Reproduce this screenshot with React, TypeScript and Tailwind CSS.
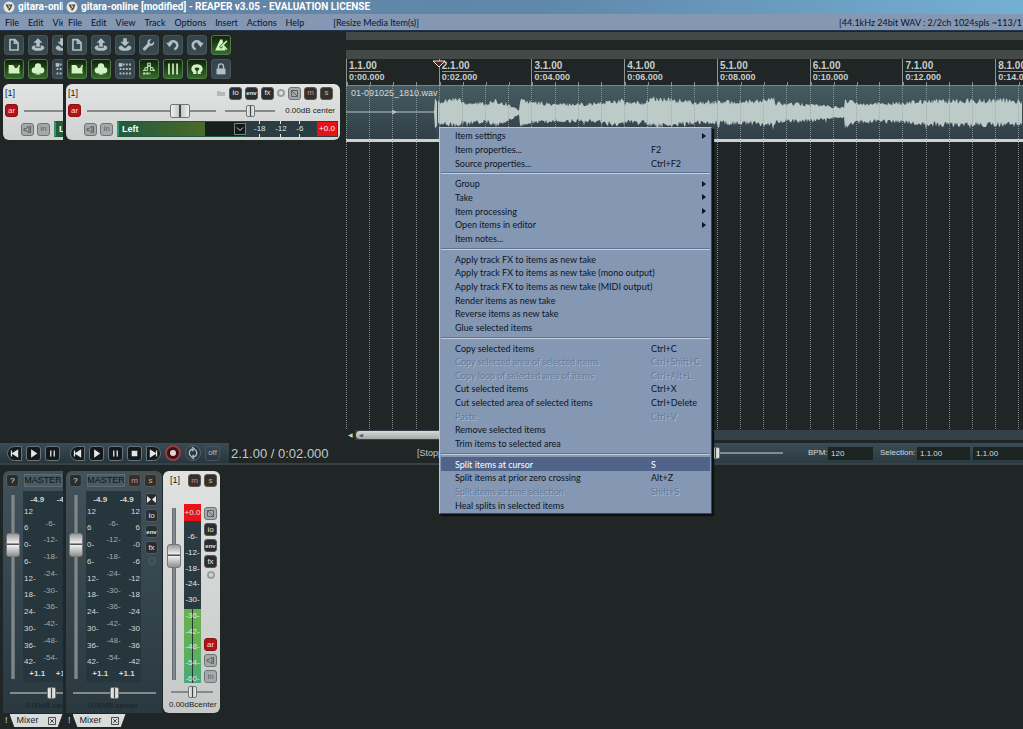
import type { ReactNode } from 'react';
import clsx from 'clsx';

const menus = ['File', 'Edit', 'View', 'Track', 'Options', 'Insert', 'Actions', 'Help'];

type Item = { label: string; keys?: string; sub?: boolean; off?: boolean; active?: boolean };

const menuGroups: Item[][] = [
  [
    { label: 'Item settings', sub: true },
    { label: 'Item properties...', keys: 'F2' },
    { label: 'Source properties...', keys: 'Ctrl+F2' },
  ],
  [
    { label: 'Group', sub: true },
    { label: 'Take', sub: true },
    { label: 'Item processing', sub: true },
    { label: 'Open items in editor', sub: true },
    { label: 'Item notes...' },
  ],
  [
    { label: 'Apply track FX to items as new take' },
    { label: 'Apply track FX to items as new take (mono output)' },
    { label: 'Apply track FX to items as new take (MIDI output)' },
    { label: 'Render items as new take' },
    { label: 'Reverse items as new take' },
    { label: 'Glue selected items' },
  ],
  [
    { label: 'Copy selected items', keys: 'Ctrl+C' },
    { label: 'Copy selected area of selected items', keys: 'Ctrl+Shift+C', off: true },
    { label: 'Copy loop of selected area of items', keys: 'Ctrl+Alt+L', off: true },
    { label: 'Cut selected items', keys: 'Ctrl+X' },
    { label: 'Cut selected area of selected items', keys: 'Ctrl+Delete' },
    { label: 'Paste', keys: 'Ctrl+V', off: true },
    { label: 'Remove selected items' },
    { label: 'Trim items to selected area' },
  ],
  [
    { label: 'Split items at cursor', keys: 'S', active: true },
    { label: 'Split items at prior zero crossing', keys: 'Alt+Z' },
    { label: 'Split items at time selection', keys: 'Shift+S', off: true },
    { label: 'Heal splits in selected items' },
  ],
];

const measures = [
  ['1.1.00', '0:00.000'],
  ['2.1.00', '0:02.000'],
  ['3.1.00', '0:04.000'],
  ['4.1.00', '0:06.000'],
  ['5.1.00', '0:08.000'],
  ['6.1.00', '0:10.000'],
  ['7.1.00', '0:12.000'],
  ['8.1.00', '0:14.000'],
];

// 20x20 drawings for the toolbar
const icons: Record<string, ReactNode> = {
  new: <path d="M5.500 4h5.500l3.500 3.500v8h-9zM10.500 4v4h4" fill="none" stroke="currentColor" strokeWidth="1.800" />,
  open: <path d="M10 2.500 5 7.500H8V12h4V7.500h3zM3 13c0-1.500 2-2.400 4-2.600V13h6v-2.600c2 .2 4 1.100 4 2.600 0 2-3 3.500-7 3.500S3 15 3 13z" fill="currentColor" />,
  save: <path d="M10 11.500 5 6.500H8V2.500h4V6.500h3zM3 13c0-1.200 1.300-2 3-2.400L10 14l4-3.400c1.700.4 3 1.200 3 2.400 0 2-3 3.500-7 3.500S3 15 3 13z" fill="currentColor" />,
  wrench: <path d="M15.500 6.200 13 8.500 11 8l-.5-2L13 3.700C11 3 8.800 4 8.300 6c-.2.800-.1 1.500.1 2.200L3.800 13a1.700 1.700 0 0 0 2.500 2.500L11 10.800c3 .8 5.600-2 4.500-4.600z" fill="currentColor" />,
  undo: (
    <>
      <path d="M6 8.500a4.600 4.600 0 1 1 5.500 6.300" fill="none" stroke="currentColor" strokeWidth="2.800" />
      <path d="M2.500 7.500h7.500L6 12.500z" fill="currentColor" />
    </>
  ),
  redo: (
    <>
      <path d="M14 8.500a4.600 4.600 0 1 0-5.500 6.300" fill="none" stroke="currentColor" strokeWidth="2.800" />
      <path d="M17.500 7.500H10l4 5z" fill="currentColor" />
    </>
  ),
  metronome: (
    <>
      <path d="M3.500 16 9 4h2.500l3.500 12z" fill="currentColor" />
      <path d="m9 13 8-8" stroke="#24501c" strokeWidth="3" />
      <path d="m9.500 12.500 7-7M12 10l4.500 5" stroke="currentColor" strokeWidth="1.700" />
    </>
  ),
  crossfade: (
    <>
      <path d="M4 5.500h12v9.500H4z" fill="currentColor" />
      <path d="M9 5.500h7c-1 2.500-2.500 4-4 4.500z" fill="#24501c" />
      <path d="M5 6 16 14.500M10.500 10.500c3-.5 5-2 5.500-5" stroke="currentColor" strokeWidth="1.300" fill="none" />
    </>
  ),
  group: (
    <>
      <circle cx="10" cy="7" r="3.500" fill="currentColor" />
      <circle cx="6.500" cy="11.500" r="3.500" fill="currentColor" />
      <circle cx="13.500" cy="11.500" r="3.500" fill="currentColor" />
      <path d="M9 9h2v5l2 2H7l2-2z" fill="currentColor" />
    </>
  ),
  grid: (
    <>
      <path d="M4 5h13M4 10h13M4 15h13" stroke="currentColor" strokeWidth="2" strokeDasharray="2 1.500" />
      <path d="M3 3.500h4v4H3z" fill="currentColor" />
    </>
  ),
  envelope: (
    <>
      <path d="M3.500 12 7 10l3-5 3 5 3.500 2" stroke="currentColor" fill="none" strokeWidth="1.300" />
      <path d="M8.500 3.500h3v3h-3zM5.500 8.500h3v3h-3zM11.500 8.500h3v3h-3z" fill="#24501c" stroke="currentColor" />
      <path d="M3.500 15h8" stroke="currentColor" strokeWidth="2" strokeDasharray="2.500 1" />
    </>
  ),
  lines: <path d="M5.500 4v12M10 4v12M14.500 4v12" stroke="currentColor" strokeWidth="1.800" />,
  snap: <path d="M7.500 15.500v-2.500c-3.500-3-2-6.500 2.500-6.500s6 3.500 2.500 6.500v2.500" fill="none" stroke="currentColor" strokeWidth="3.600" />,
  lock: (
    <>
      <path d="M5 9.500h10v6.500H5z" fill="currentColor" />
      <path d="M7.200 10V7c0-3.600 5.600-3.600 5.600 0v3" stroke="currentColor" strokeWidth="1.600" fill="none" />
    </>
  ),
};

const toolRows: [string, boolean][][] = [
  [['new', false], ['open', false], ['save', false], ['wrench', false], ['undo', false], ['redo', false], ['metronome', true]],
  [['crossfade', true], ['group', true], ['grid', false], ['envelope', true], ['lines', true], ['snap', true], ['lock', false]],
];

const TitleBar = ({ clipped = false }: { clipped?: boolean }) => (
  <div className="h-[14px] shrink-0 flex items-center gap-[3px] pl-[3px] font-['Roboto',sans-serif] text-[10px] leading-none font-bold text-white whitespace-nowrap">
    <svg viewBox="0 0 12 12" className="w-3 h-3 shrink-0">
      <circle cx="6" cy="6" r="5.500" fill="#e8e6de" />
      <path d="M2.500 3.500h7L8 7.500 6 10 4.500 7z" fill="#4b4a46" />
      <path d="m5 4.500 2 1-1.500 2" stroke="#e8e6de" fill="none" />
    </svg>
    {clipped ? 'gitara-online' : 'gitara-online [modified] - REAPER v3.05 - EVALUATION LICENSE'}
  </div>
);

const MenuBar = ({ clipped = false }: { clipped?: boolean }) => (
  <nav className="h-[17px] shrink-0 flex items-center pl-[5px] pr-px gap-[9px] overflow-hidden bg-[#8497b3] border-b border-[#26344a] font-['Lato',sans-serif] text-[9px] leading-none text-[#0c1526] whitespace-nowrap">
    {(clipped ? menus.slice(0, 3) : menus).map((m) => (
      <button key={m}>{m}</button>
    ))}
    {!clipped && (
      <>
        <span className="ml-[20px]">[Resize Media Item(s)]</span>
        <span className="ml-auto">[44.1kHz 24bit WAV : 2/2ch 1024spls ~113/1</span>
      </>
    )}
  </nav>
);

const Toolbar = ({ clipped = false }: { clipped?: boolean }) => (
  <div className="flex flex-col gap-1 pl-1 pt-1">
    {toolRows.map((row, i) => (
      <div key={i} className="flex gap-1">
        {(clipped ? row.slice(0, 3) : row).map(([name, on]) => (
          <button
            key={name}
            aria-label={name}
            className={clsx(
              'w-5 h-5 shrink-0 rounded-[3px] border',
              on
                ? 'bg-linear-to-b from-[#10240c] to-[#356b2b] border-[#4f7a48] text-[#d3f3c4]'
                : 'bg-linear-to-b from-[#33434a] to-[#3b4a51] border-[#46565c] text-[#b4bfc2]',
            )}
          >
            <svg viewBox="0 0 20 20" className="w-full h-full">{icons[name]}</svg>
          </button>
        ))}
      </div>
    ))}
  </div>
);

const tones = {
  dark: 'bg-[#2a2d2f] border-[#55595b] text-[#e4e6e6]',
  mute: 'bg-[#372e2e] border-[#5c5453] text-[#cf9289]',
  solo: 'bg-[#33302b] border-[#5c5850] text-[#c9bd84]',
  grey: 'bg-[#a4aaa9] border-[#6e7473] text-[#5c6362]',
  red: 'bg-[#b21218] border-[#8a1014] text-[#ffd9d4]',
};

const Chip = ({ children, tone = 'dark', label }: { children: ReactNode; tone?: keyof typeof tones; label?: string }) => (
  <button
    aria-label={label}
    className={clsx('w-[13px] h-[13px] shrink-0 rounded-[3px] border flex items-center justify-center text-[8px] leading-none', tones[tone])}
  >
    {children}
  </button>
);

const EnvChip = () => (
  <Chip><span className="text-[6px] font-bold">env</span></Chip>
);

const Speaker = () => (
  <svg viewBox="0 0 9 9" className="w-[9px] h-[9px]">
    <path d="M1 3.500h2L6 1v7L3 5.500H1zM7.500 1v7" stroke="currentColor" fill="none" />
  </svg>
);

const Phase = () => (
  <svg viewBox="0 0 9 9" className="w-[9px] h-[9px]">
    <path d="M1.500 1.500h6v6h-6zM1.500 1.500l6 6" stroke="currentColor" fill="none" />
  </svg>
);

const Ring = ({ dim = false }: { dim?: boolean }) => (
  <span className={clsx('w-2 h-2 shrink-0 rounded-full border-2', dim ? 'border-[#45555d]' : 'border-[#9b9f9e]')} />
);

const hSlider =
  'appearance-none bg-transparent h-[13px] m-0 shrink-0 [&::-webkit-slider-runnable-track]:h-[2px] [&::-webkit-slider-runnable-track]:bg-[#84898a] [&::-webkit-slider-thumb]:appearance-none [&::-webkit-slider-thumb]:rounded-[2px] [&::-webkit-slider-thumb]:border [&::-webkit-slider-thumb]:border-[#707576] [&::-webkit-slider-thumb]:bg-[linear-gradient(90deg,#eee_0,#c5c8c8_46%,#444_46%,#444_56%,#c5c8c8_56%,#eee)]';
const smallThumb = '[&::-webkit-slider-thumb]:w-[9px] [&::-webkit-slider-thumb]:h-[12px] [&::-webkit-slider-thumb]:mt-[-5px]';
const wideThumb = '[&::-webkit-slider-thumb]:w-[20px] [&::-webkit-slider-thumb]:h-[14px] [&::-webkit-slider-thumb]:mt-[-6px]';

const VFader = ({ label }: { label: string }) => (
  <input
    type="range"
    aria-label={label}
    defaultValue={76}
    className="appearance-none m-0 w-[14px] h-full [writing-mode:vertical-lr] [direction:rtl] bg-[linear-gradient(90deg,transparent_5px,#5d6467_5px,#8c9294_7px,#5d6467_9px,transparent_9px)] [&::-webkit-slider-thumb]:appearance-none [&::-webkit-slider-thumb]:w-[14px] [&::-webkit-slider-thumb]:h-[24px] [&::-webkit-slider-thumb]:rounded-[3px] [&::-webkit-slider-thumb]:border [&::-webkit-slider-thumb]:border-[#777] [&::-webkit-slider-thumb]:bg-[linear-gradient(180deg,#999_0,#f2f2f2_42%,#555_44%,#555_50%,#eee_52%,#8f8f8f)]"
  />
);

const TrackPanel = ({ clipped = false }: { clipped?: boolean }) => (
  <div
    className={clsx(
      'ml-[3px] mt-[5px] h-14 flex flex-col justify-between pt-[2px] pb-[3px] pl-[2px] bg-linear-to-b from-[#e2e4e3] to-[#cfd2d1] text-[#1a1c1c] whitespace-nowrap overflow-hidden',
      clipped ? 'rounded-l-md' : 'rounded-md w-[274px]',
    )}
  >
    <div className="h-[14px] flex items-center text-[9px] leading-none">
      <span>[1]</span>
      {!clipped && (
        <div className="ml-auto mr-[7px] flex items-center gap-[3px]">
          <svg viewBox="0 0 8 6" className="w-2 h-[6px] mr-px"><path d="M0 1h3v1h5v4H0z" fill="#b5b8b7" /></svg>
          <Chip>io</Chip>
          <EnvChip />
          <Chip>fx</Chip>
          <Ring />
          <Chip tone="grey" label="phase"><Phase /></Chip>
          <Chip tone="mute">m</Chip>
          <Chip tone="solo">s</Chip>
        </div>
      )}
    </div>
    <div className="flex items-center text-[8px] leading-none">
      <Chip tone="red">ar</Chip>
      <input type="range" aria-label="Volume" defaultValue={76} className={clsx(hSlider, wideThumb, 'ml-[6px] w-[129px]')} />
      {!clipped && (
        <>
          <input type="range" aria-label="Pan" defaultValue={50} className={clsx(hSlider, smallThumb, 'ml-[9px] w-[50px]')} />
          <span className="ml-auto mr-[5px]">0.00dB center</span>
        </>
      )}
    </div>
    <div className="flex items-center pl-4 gap-[3px]">
      <Chip tone="grey" label="monitor"><Speaker /></Chip>
      <Chip tone="grey">in</Chip>
      <div className={clsx('ml-px h-4 flex items-center bg-[#2b3d43]', clipped ? 'w-4' : 'w-[221px]')}>
        <div className="relative w-[129px] h-4 shrink-0">
          <select
            aria-label="Input"
            className="appearance-none block w-full h-4 p-0 pl-[3px] border border-[#1c5a3c] border-l-2 border-l-[#2f9a68] outline-none text-[9px] leading-[14px] font-bold text-white bg-[linear-gradient(90deg,#245a3f,#4a6a28_68%,#17201c_68%)]"
          >
            <option>Left</option>
          </select>
          <svg viewBox="0 0 12 12" className="absolute right-0 top-[2px] w-3 h-3 pointer-events-none">
            <path d="M.5.5h11v11H.5z" fill="#131918" stroke="#7b8583" />
            <path d="m3 4.500 3 3 3-3" fill="none" stroke="#d6dad9" />
          </svg>
        </div>
        {!clipped && (
          <div className="flex-1 h-full flex items-center justify-between pl-2 text-[8px] leading-none text-[#dfe5e6]">
            {['-18', '-12', '-6'].map((n) => (
              <span key={n} className="h-full flex items-center bg-[linear-gradient(180deg,#dfe5e6_3px,transparent_3px,transparent_13px,#dfe5e6_13px)] bg-[length:1px_100%] bg-center bg-no-repeat">
                {n}
              </span>
            ))}
            <span className="h-[14px] w-[20px] ml-1 mr-px flex items-center justify-center bg-[#e81218] text-white">+0.0</span>
          </div>
        )}
      </div>
    </div>
  </div>
);

// half-height of the recorded signal along the item, x and amplitude
const signal = [
  [88, 0.3], [89, 14], [93, 11], [114, 14], [116, 10], [140, 9], [150, 11], [160, 9], [173, 2], [174, 13], [185, 10],
  [210, 8], [255, 9], [262, 11], [278, 12], [279, 9], [300, 10], [304, 14], [330, 12], [350, 10], [410, 11], [428, 13],
  [430, 9], [465, 8], [495, 5], [498, 5], [499, 13], [510, 9], [550, 9], [580, 12], [610, 12], [660, 12], [677, 11],
];

const amplitude = (x: number) => {
  const i = signal.findIndex(([px]) => px > x);
  if (i < 1) return 0.3;
  const [x0, a0] = signal[i - 1];
  const [x1, a1] = signal[i];
  return a0 + ((a1 - a0) * (x - x0)) / (x1 - x0);
};

const noise = (n: number) => {
  const v = Math.sin(n * 127.1) * 43758.5453;
  return v - Math.floor(v);
};

const Waveform = () => {
  const top: string[] = [];
  const bottom: string[] = [];
  for (let x = 88; x < 677; x++) {
    const a = amplitude(x);
    const rough = a / 2;
    const spike = noise(x * 3) > 0.94 ? 3 : 0;
    top.push(`${x},${(27 - a - (noise(x) - 0.5) * rough).toFixed(1)}`);
    bottom.unshift(`${x},${(27 + a + (noise(x + 900) - 0.5) * rough + spike).toFixed(1)}`);
  }
  return (
    <svg viewBox="0 0 677 54" preserveAspectRatio="none" className="absolute inset-0 w-full h-full">
      <path d="M0 26.500h92" stroke="#b9c6c5" />
      <path d="m46 24 5 2.500-5 2.500z" fill="#b9c6c5" />
      <polygon points={[...top, ...bottom].join(' ')} fill="#bccac8" />
    </svg>
  );
};

const BeatGrid = () => (
  <div className="absolute inset-0 flex overflow-hidden pointer-events-none">
    {measures.map(([bar]) => (
      <div key={bar} className="w-[13.7%] shrink-0 grid grid-cols-4">
        {[0, 1, 2, 3].map((beat) => (
          <div key={beat} className="border-l border-dotted border-[#9aa4a2]/80" />
        ))}
      </div>
    ))}
  </div>
);

const Arrange = () => (
  <div className="relative flex-1 min-w-0 ml-[6px] flex flex-col">
    <div className="h-2 mt-px bg-[#424946]" />
    <div className="h-[9px] mt-[10px] bg-[#424946]" />
    <div className="h-[26px] flex overflow-hidden text-[#c9cdcb] font-bold leading-none">
      {measures.map(([bar, time]) => (
        <div key={bar} className="relative w-[13.7%] shrink-0 border-l border-[#8e9492] pl-[2px] pt-[2px]">
          <div className="w-8 h-[11px] border-b border-[#8e9492] text-[10px]">{bar}</div>
          <div className="pt-px text-[9px]">{time}</div>
          <div className="absolute bottom-0 left-0 w-full h-[3px] grid grid-cols-4">
            {[0, 1, 2, 3].map((beat) => (
              <div key={beat} className="border-l border-[#8e9492]" />
            ))}
          </div>
        </div>
      ))}
    </div>
    <div className="relative flex-1 flex flex-col">
      <div className="relative h-[54px] border-t border-[#75858a] bg-linear-to-b from-[#465c62] to-[#313f47]">
        <Waveform />
        <div className="absolute inset-y-0 left-[91px] w-px bg-[#7a3a3a]" />
        <span className="relative block pl-[5px] pt-[2px] text-[9px] leading-[10px] text-[#d2dad9]">01-091025_1810.wav</span>
      </div>
      <div className="h-[3px] bg-[#ccd2d0]" />
      <BeatGrid />
    </div>
    <div className="h-[10px] mt-px mb-[3px] flex items-center gap-px bg-[#33424a]">
      <button aria-label="Scroll left" className="w-[9px] h-[10px] bg-[#1d2726] text-[6px] leading-none text-[#c9cdcb]">◀</button>
      <div className="w-[270px] h-2 rounded-l-sm bg-linear-to-b from-[#d5d9d7] to-[#a4aaa8] pl-[3px] text-[5px] leading-[8px] text-[#555]">◀</div>
    </div>
    <svg viewBox="0 0 14 8" className="absolute top-[29px] left-[86px] w-[14px] h-2">
      <path d="M1 1h12L7 7z" fill="#5a2622" stroke="#e9e4df" />
    </svg>
  </div>
);

const transport: [string, string][] = [
  ['Start', 'M4 4v7M11 4v7L5.500 7.500z'],
  ['Play', 'M5.500 4 10.500 7.500l-5 3.500z'],
  ['Pause', 'M5.500 4v7M9.500 4v7'],
  ['Stop', 'M5 5h5v5H5z'],
  ['End', 'M11 4v7M4 4v7l5.500-3.500z'],
];

const Transport = ({ clipped = false }: { clipped?: boolean }) => (
  <div className="h-[22px] shrink-0 flex items-center border-b-2 border-[#34434a] whitespace-nowrap">
    <div className={clsx('h-full flex items-center gap-1 pl-[7px] shrink-0 bg-linear-to-b from-[#3b4c56] to-[#27353c]', clipped ? 'w-full' : 'w-[166px]')}>
      {(clipped ? transport.slice(0, 3) : transport).map(([name, d], i) => (
        <button
          key={name}
          aria-label={name}
          className={clsx(
            'w-[15px] h-[15px] shrink-0 border border-[#67757b] bg-[#141a1c] text-[#e3e7e7]',
            i === 0 ? 'rounded-l-full rounded-r-[3px]' : i === 4 ? 'rounded-r-full rounded-l-[3px]' : 'rounded-[3px]',
          )}
        >
          <svg viewBox="0 0 15 15" className="w-full h-full">
            <path d={d} fill="currentColor" stroke="currentColor" strokeWidth="1.500" />
          </svg>
        </button>
      ))}
      {!clipped && (
        <>
          <button aria-label="Record" className="w-4 h-4 shrink-0 rounded-full border-2 border-[#9a3c40] bg-[#3a1417] flex items-center justify-center">
            <span className="w-[6px] h-[6px] rounded-full bg-[#ecd3d2]" />
          </button>
          <button aria-label="Repeat" className="w-4 h-4 shrink-0 rounded-full border border-[#50626b] bg-[#2b3a42] text-[#a9bac1]">
            <svg viewBox="0 0 14 14" className="w-full h-full">
              <path d="M7 3a4 4 0 0 0-2 7.300M7 11a4 4 0 0 0 2-7.300M6 1l2.500 2L6 5M8 9l-2.500 2L8 13" fill="none" stroke="currentColor" strokeWidth="1.300" />
            </svg>
          </button>
          <button className="w-[15px] h-[15px] shrink-0 rounded-[3px] border border-[#43545c] text-[8px] leading-none text-[#a9bac1]">off</button>
        </>
      )}
    </div>
    {!clipped && (
      <>
        <div className="flex-1 flex items-center pl-[2px] leading-none text-[#c3c8c6]">
          <span className="text-[13px] w-[186px]">2.1.00 / 0:02.000</span>
          <span className="text-[9px]">[Stopped]</span>
        </div>
        <div className="w-[350px] h-full shrink-0 flex items-center bg-linear-to-b from-[#3b4c56] to-[#2c3b42] text-[8px] leading-none text-[#d6dad9]">
          <input type="range" aria-label="Play rate" defaultValue={38} className={clsx(hSlider, smallThumb, 'w-[110px] mr-[25px]')} />
          <label htmlFor="bpm" className="w-5">BPM:</label>
          <input id="bpm" defaultValue="120" className="w-[45px] h-[13px] pl-[3px] bg-[#1c2423]" />
          <label htmlFor="sel" className="ml-[7px] w-[37px]">Selection:</label>
          <input id="sel" defaultValue="1.1.00" className="w-[53px] h-[13px] pl-[3px] bg-[#1c2423]" />
          <input aria-label="Selection end" defaultValue="1.1.00" className="ml-[3px] flex-1 min-w-0 h-[13px] pl-[3px] bg-[#1c2423]" />
        </div>
      </>
    )}
  </div>
);

const leftScale = ['12', '6', '0-', '6-', '12-', '18-', '24-', '30-', '36-', '42-'];
const rightScale = ['12', '6', '-0', '-6', '-12', '-18', '-24', '-30', '-36', '-42'];
const midScale = ['-6-', '-12-', '-18-', '-24-', '-30-', '-36-', '-42-', '-48-', '-54-'];
const trackScale = ['-6-', '-12-', '-18-', '-24-', '-30-', '-36-', '-42-', '-48-', '-54-', '-60-'];

const MasterStrip = ({ clipped = false }: { clipped?: boolean }) => (
  <section
    className={clsx(
      'ml-[3px] h-[242px] shrink-0 flex flex-col pl-[3px] pt-[3px] overflow-hidden bg-linear-to-b from-[#41525b] to-[#2a3940] whitespace-nowrap',
      clipped ? 'rounded-tl-md w-[60px]' : 'rounded-t-md w-[96px] mr-px',
    )}
  >
    <div className="flex items-center gap-[3px]">
      <Chip>?</Chip>
      <span className="w-[38px] h-[13px] ml-[2px] shrink-0 flex items-center justify-center border border-[#5c6d75] bg-[#4a5b63] text-[9px] leading-none text-[#0e1416]">
        MASTER
      </span>
      {!clipped && (
        <>
          <Chip tone="mute">m</Chip>
          <Chip tone="solo">s</Chip>
        </>
      )}
    </div>
    <div className="flex h-[191px] mt-1">
      <div className="h-[184px] mt-[4px]"><VFader label="Master volume" /></div>
      <div className="w-[55px] ml-[3px] shrink-0 flex flex-col justify-between px-px py-1 bg-[#27363d] text-[8px] leading-[9px] text-[#d3dadc]">
        <div className="flex justify-around font-bold"><span>-4.9</span><span>-4.9</span></div>
        <div className="h-[160px] flex justify-between">
          <div className="flex flex-col justify-between">{leftScale.map((n) => <span key={n}>{n}</span>)}</div>
          <div className="h-[143px] mt-[12px] flex flex-col justify-between text-center text-[#9fabb0]">
            {midScale.map((n) => <span key={n}>{n}</span>)}
          </div>
          <div className="flex flex-col justify-between text-right">{rightScale.map((n) => <span key={n}>{n}</span>)}</div>
        </div>
        <div className="flex justify-around font-bold"><span>+1.1</span><span>+1.1</span></div>
      </div>
      {!clipped && (
        <div className="ml-1 mt-[2px] flex flex-col items-center gap-[3px]">
          <Chip label="mono">
            <svg viewBox="0 0 9 7" className="w-[9px] h-[7px]"><path d="M0 0l4 3.500L0 7zM9 0 5 3.500 9 7z" fill="currentColor" /></svg>
          </Chip>
          <Chip>io</Chip>
          <EnvChip />
          <Chip>fx</Chip>
          <Ring dim />
        </div>
      )}
    </div>
    <input type="range" aria-label="Master pan" defaultValue={50} className={clsx(hSlider, smallThumb, 'mt-[4px] ml-1 w-[83px]')} />
    <span className="ml-[19px] mt-[3px] text-[8px] leading-none text-[#18222a]">0.00dB center</span>
  </section>
);

const TrackStrip = () => (
  <section className="w-[57px] h-[242px] flex flex-col pt-[3px] rounded-md bg-linear-to-b from-[#e0e2e1] to-[#c6c9c8] text-[#1a1c1c]">
    <div className="flex items-center gap-[3px] pr-[3px]">
      <span className="flex-1 pl-[7px] text-[9px] leading-none">[1]</span>
      <Chip tone="mute">m</Chip>
      <Chip tone="solo">s</Chip>
    </div>
    <div className="h-[179px] mt-[17px] flex pl-1">
      <div className="h-[172px] mt-[4px]"><VFader label="Track volume" /></div>
      <div className="w-[17px] ml-[3px] flex flex-col bg-[linear-gradient(180deg,#2b3a41_105px,#69b04c_105px,#5fb257_140px,#4aa87c)] text-[8px] leading-[9px] text-center text-[#e2e8e8]">
        <span className="h-[17px] leading-[17px] bg-[#e81218] whitespace-nowrap">+0.0</span>
        <div className="flex-1 flex flex-col justify-between pt-[11px] bg-[linear-gradient(180deg,transparent_88px,#1f3a2c_88px)] bg-[length:1px_100%] bg-center bg-no-repeat">
          {trackScale.map((n) => <span key={n}>{n}</span>)}
        </div>
      </div>
      <div className="ml-[3px] pt-[3px] flex flex-col items-center gap-[3px]">
        <Chip tone="grey" label="phase"><Phase /></Chip>
        <Chip>io</Chip>
        <EnvChip />
        <Chip>fx</Chip>
        <Ring />
        <div className="mt-auto flex flex-col gap-[3px]">
          <Chip tone="red">ar</Chip>
          <Chip tone="grey" label="monitor"><Speaker /></Chip>
          <Chip tone="grey">in</Chip>
        </div>
      </div>
    </div>
    <input type="range" aria-label="Track pan" defaultValue={50} className={clsx(hSlider, smallThumb, 'mt-[2px] ml-2 w-[42px]')} />
    <span className="mt-[3px] pl-[6px] text-[8px] leading-none whitespace-nowrap">0.00dBcenter</span>
  </section>
);

const MixerTab = () => (
  <div className="h-4 flex items-start pl-[5px] pt-px gap-[2px] text-[9px] text-[#d6dad9]">
    <span className="leading-[13px]">!</span>
    <button className="w-[53px] h-[13px] flex items-center justify-between px-[7px] bg-[#d9dcdb] text-[#1a1c1c] leading-none [clip-path:polygon(0_0,100%_0,91%_100%,9%_100%)]">
      Mixer
      <svg viewBox="0 0 9 9" className="w-2 h-2"><path d="M.5.5h8v8h-8zM2.500 2.500l4 4M6.500 2.500l-4 4" fill="none" stroke="#333" /></svg>
    </button>
  </div>
);

const ContextMenu = () => (
  <div
    role="menu"
    className="absolute left-[439px] top-[127px] w-[273px] h-[387px] flex flex-col p-px border border-[#b9c6d8] border-r-[#3a465a] border-b-[#3a465a] bg-[#8497b3] shadow-[2px_2px_1px_#0c1014] font-['Lato',sans-serif] text-[9px] leading-none text-[#0c1526] whitespace-nowrap"
  >
    {menuGroups.map((group, i) => (
      <div key={i} className="contents">
        {i > 0 && <div className="h-[7px] shrink-0 flex flex-col justify-center"><hr className="border-t-[#5f7290] border-b border-b-[#c3cfdf]" /></div>}
        {group.map((item) => (
          <button
            key={item.label}
            role="menuitem"
            disabled={item.off}
            className={clsx(
              'flex-1 min-h-0 flex items-center pl-[14px] pr-1 text-left',
              item.active && 'bg-[#50648a] text-white',
              item.off && 'text-[#667a98] [text-shadow:1px_1px_0_#a9b9cf]',
            )}
          >
            <span className="flex-1">{item.label}</span>
            {item.keys && <span className="w-[55px]">{item.keys}</span>}
            {item.sub && <svg viewBox="0 0 4 6" className="w-1 h-[6px]"><path d="M0 0l4 3-4 3z" fill="#0c1526" /></svg>}
          </button>
        ))}
      </div>
    ))}
  </div>
);

export default function App() {
  return (
    <div className="relative min-h-screen flex overflow-hidden bg-[#1f2625] font-['Liberation_Sans',sans-serif]">
      <div className="w-[63px] shrink-0 flex flex-col overflow-hidden">
        <div className="bg-[#6d8cab]"><TitleBar clipped /></div>
        <MenuBar clipped />
        <div className="flex-1">
          <Toolbar clipped />
          <TrackPanel clipped />
        </div>
        <Transport clipped />
        <div className="pt-[6px]">
          <MasterStrip clipped />
          <MixerTab />
        </div>
      </div>
      <main className="flex-1 min-w-0 flex flex-col">
        <div className="bg-linear-to-r from-[#6483a4] via-[#5f88aa] to-[#74b0d4]"><TitleBar /></div>
        <MenuBar />
        <div className="flex-1 flex">
          <div className="w-[277px] shrink-0">
            <Toolbar />
            <TrackPanel />
          </div>
          <Arrange />
        </div>
        <Transport />
        <div className="pt-[6px]">
          <div className="flex">
            <MasterStrip />
            <TrackStrip />
          </div>
          <MixerTab />
        </div>
      </main>
      <ContextMenu />
    </div>
  );
}
